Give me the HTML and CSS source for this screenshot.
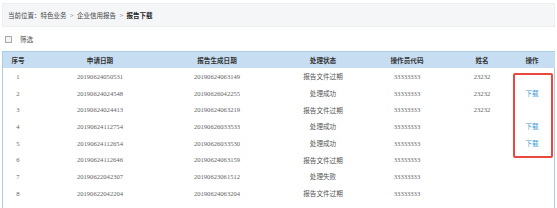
FILE: index.html
```html
<!DOCTYPE html>
<html lang="zh">
<head>
    <meta charset="UTF-8">
    <title>报告下载</title>
    <link rel="stylesheet" href="styles.css">
</head>
<body>
    <div class="crumb">
        <span>当前位置：特色业务</span>
        <span class="sep">&gt;</span>
        <span>企业信用报告</span>
        <span class="sep">&gt;</span>
        <b>报告下载</b>
    </div>

    <div class="filter">
        <span class="chk"></span>
        <span>筛选</span>
    </div>

    <div class="wrap">
        <table class="list">
            <thead>
                <tr>
                    <th class="c1">序号</th>
                    <th class="c2">申请日期</th>
                    <th class="c3">报告生成日期</th>
                    <th class="c4">处理状态</th>
                    <th class="c5">操作员代码</th>
                    <th class="c6">姓名</th>
                    <th class="c7">操作</th>
                </tr>
            </thead>
            <tbody>
                <tr><td>1</td><td>20190624050531</td><td>20190624063149</td><td>报告文件过期</td><td>33333333</td><td>23232</td><td></td></tr>
                <tr><td>2</td><td>20190624024548</td><td>20190626042255</td><td>处理成功</td><td>33333333</td><td>23232</td><td><a href="#">下载</a></td></tr>
                <tr><td>3</td><td>20190624024413</td><td>20190624063219</td><td>报告文件过期</td><td>33333333</td><td>23232</td><td></td></tr>
                <tr><td>4</td><td>20190624112754</td><td>20190626033533</td><td>处理成功</td><td>33333333</td><td></td><td><a href="#">下载</a></td></tr>
                <tr><td>5</td><td>20190624112654</td><td>20190626033530</td><td>处理成功</td><td>33333333</td><td></td><td><a href="#">下载</a></td></tr>
                <tr><td>6</td><td>20190624112646</td><td>20190624063159</td><td>报告文件过期</td><td>33333333</td><td></td><td></td></tr>
                <tr><td>7</td><td>20190622042307</td><td>20190623061512</td><td>处理失败</td><td>33333333</td><td></td><td></td></tr>
                <tr><td>8</td><td>20190622042204</td><td>20190624063204</td><td>报告文件过期</td><td>33333333</td><td></td><td></td></tr>
            </tbody>
        </table>
        <div class="mark"></div>
    </div>
</body>
</html>
```

FILE: styles.css
```css
*{
    margin: 0;
    padding: 0;
}
body{
    font-family: "Liberation Serif", "Noto Sans CJK SC", serif;
    font-size: 6.6px;
    color: #666;
    background: #fff;
    padding: 3px 2px 0 2px;
}
.crumb{
    height: 22px;
    line-height: 22px;
    padding-left: 5px;
    background-color: #f5f6f8;
    border: 1px solid #eceef1;
    font-family: "Noto Sans CJK SC", sans-serif;
    font-size: 6.5px;
    color: #444;
}
.crumb .sep{
    color: #999;
    margin: 0 2px;
}
.crumb b{
    color: #222;
}
.filter{
    height: 24px;
    padding-left: 3px;
    font-family: "Noto Sans CJK SC", sans-serif;
    font-size: 6.6px;
    color: #555;
    display: flex;
    align-items: center;
    gap: 8px;
}
.chk{
    width: 5px;
    height: 5px;
    border: 1px solid #aaa;
    background: #f4f4f4;
}
.wrap{
    position: relative;
    border-left: 1px solid #a9d0e0;
    border-right: 1px solid #a9d0e0;
    padding-bottom: 6px;
}
.list{
    width: 100%;
    border-collapse: collapse;
    table-layout: fixed;
}
.list th{
    height: 16px;
    padding: 0;
    background-color: #c7def2;
    border-top: 1px solid #a9cde4;
    font-family: "Noto Sans CJK SC", sans-serif;
    font-size: 6.6px;
    font-weight: bold;
    color: #333;
    white-space: nowrap;
}
.list td{
    height: 16.7px;
    padding: 0;
    text-align: center;
    color: #666;
    white-space: nowrap;
}
.list td:nth-child(4), .list td a{
    font-family: "Noto Sans CJK SC", sans-serif;
    font-size: 6.6px;
    color: #555;
}
.list td a{
    color: #3d9bd8;
    text-decoration: none;
}
.list th:nth-child(5), .list td:nth-child(5){
    padding-right: 10px;
}
.list th:nth-child(6), .list td:nth-child(6){
    padding-left: 10px;
}
.c1{ width: 30px; }
.c2{ width: 134px; }
.c3{ width: 100px; }
.c4{ width: 112px; }
.c5{ width: 56px; }
.c6{ width: 54px; }
.c7{ width: 46px; }
.mark{
    position: absolute;
    left: 510px;
    top: 22px;
    width: 36px;
    height: 81px;
    border: 2.5px solid #e8483e;
    border-radius: 2px;
}
```
